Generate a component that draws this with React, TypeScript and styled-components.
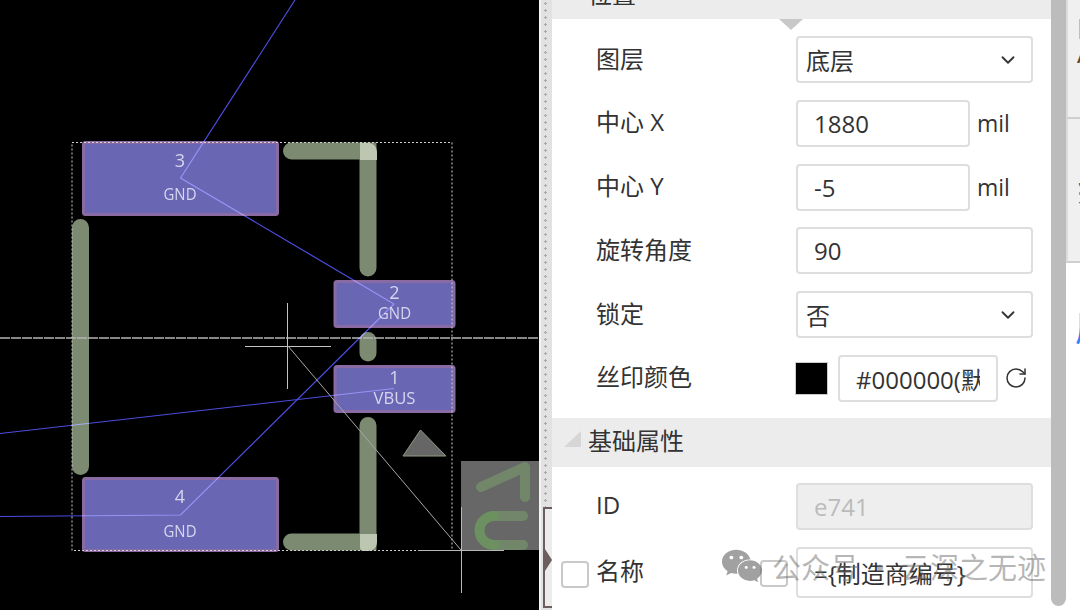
import React from 'react'
import styled, { createGlobalStyle } from 'styled-components'
import { ChevronDown, RotateCw } from 'lucide-react'
import { FaWeixin } from 'react-icons/fa'

const GlobalStyle = createGlobalStyle`
  html, body {
    margin: 0;
    padding: 0;
    background: #fff;
  }
  * {
    box-sizing: border-box;
  }
`

const Page = styled.div`
  position: relative;
  display: flex;
  width: 1080px;
  height: 610px;
  overflow: hidden;
  font-family: 'Open Sans', 'Noto Sans CJK SC', sans-serif;
  color: #333;
`

const Canvas = styled.svg`
  display: block;
  flex: 0 0 539px;
  height: 610px;
  background: #000;
`

const SilkLine = styled.path`
  fill: none;
  stroke: #7b8a70;
  stroke-width: 17;
  stroke-linecap: round;
`

const Ratsnest = styled.g`
  mix-blend-mode: screen;
  stroke: #4c4ce0;
  stroke-width: 1.2;
  fill: none;
`

const PadRect = styled.rect`
  fill: #6966b4;
  stroke: #8a6aa2;
  stroke-width: 3;
`

const PadText = styled.text`
  fill: #d6d6ee;
  font-family: 'Open Sans', sans-serif;
  text-anchor: middle;
`

const Splitter = styled.div`
  position: relative;
  flex: 0 0 13px;
  height: 610px;
  padding-left: 2px;
  background: #e2e2e2;
  border-left: 2px solid #f4f4f4;
`

const SplitterDots = styled.div`
  width: 5px;
  height: 507px;
  background-image: radial-gradient(circle, #a9a9a9 1px, transparent 1.4px);
  background-size: 5px 7px;
`

const SplitterHandle = styled.div`
  position: absolute;
  left: 2px;
  top: 507px;
  width: 9px;
  height: 101px;
  background: #ececec;
  border: 2px solid #6b5e5e;
  border-right: none;
  &::after {
    content: '';
    position: absolute;
    left: 0;
    top: 40px;
    border-left: 7px solid #6b5e5e;
    border-top: 11px solid transparent;
    border-bottom: 11px solid transparent;
  }
`

const Panel = styled.div`
  flex: 0 0 499px;
  height: 610px;
  background: #fff;
`

const SectionHeader = styled.div<{ $caret?: boolean; $offset?: number }>`
  position: relative;
  display: flex;
  align-items: center;
  height: 49px;
  margin-top: ${(p) => p.$offset ?? 0}px;
  padding: 0 0 5px 36px;
  background: #ececec;
  font-size: 24px;
  &::before {
    content: '';
    position: absolute;
    left: 12px;
    bottom: 20px;
    border-bottom: 16px solid #d6d6d6;
    border-left: 17px solid transparent;
  }
  ${(p) =>
    p.$caret &&
    `&::after {
      content: '';
      position: absolute;
      left: 227px;
      top: 100%;
      border-top: 11px solid #c8c8c8;
      border-left: 12px solid transparent;
      border-right: 12px solid transparent;
    }`}
`

const Form = styled.div<{ $top: number }>`
  display: flex;
  flex-direction: column;
  gap: 16.75px;
  padding: ${(p) => p.$top}px 18px 16px 44px;
`

const Row = styled.div`
  display: flex;
  align-items: center;
  min-height: 47px;
`

const Label = styled.div`
  flex: 0 0 200px;
  font-size: 24px;
  line-height: 47px;
  margin-top: -3px;
`

const fieldCss = `
  height: 47px;
  border: 2px solid #dedede;
  border-radius: 4px;
  background: #fff;
  color: #333;
  font-family: 'Open Sans', 'Noto Sans CJK SC', sans-serif;
  font-size: 24px;
`

const Input = styled.input<{ $width?: number; $tall?: boolean }>`
  ${fieldCss}
  width: ${(p) => (p.$width ? `${p.$width}px` : '100%')};
  height: ${(p) => (p.$tall ? 51 : 47)}px;
  min-width: 0;
  padding: 0 16px;
  outline: none;
  &:disabled {
    background: #eeeeee;
    color: #bbb;
    -webkit-text-fill-color: #bbb;
    opacity: 1;
  }
`

const Select = styled.div`
  ${fieldCss}
  display: flex;
  flex: 1;
  align-items: center;
  justify-content: space-between;
  padding: 0 12px 0 8px;
  svg {
    color: #333;
  }
`

const Unit = styled.span`
  margin-left: 7px;
  font-size: 23px;
`

const Swatch = styled.div<{ $color: string }>`
  flex: 0 0 33px;
  height: 33px;
  margin: 0 10px 0 -1px;
  background: ${(p) => p.$color};
  border: 1px solid #ccc;
`

const RefreshButton = styled.span`
  display: flex;
  margin-left: 6px;
  color: #333;
`

const ScrollTrack = styled.div`
  flex: 0 0 15px;
  height: 610px;
  background: #fff;
`

const ScrollThumb = styled.div`
  height: 606px;
  background: #bcbcbc;
  border-radius: 0 0 8px 8px;
`

const RightRail = styled.div`
  display: flex;
  flex: 1;
  flex-direction: column;
  overflow: hidden;
  background: #fff;
`

const RailBlock = styled.div<{ $height: number; $top: number; $size: number; $line: number }>`
  flex: 0 0 ${(p) => p.$height}px;
  padding: ${(p) => p.$top}px 0 0 9px;
  overflow: hidden;
  white-space: nowrap;
  background: #f0f0f0;
  border-left: 2px solid #dcdcdc;
  border-bottom: 2px solid #cfcfcf;
  font-size: ${(p) => p.$size}px;
  line-height: ${(p) => p.$line}px;
  color: #5a4638;
`

const RailLink = styled.div`
  padding: 44px 0 0 9px;
  font-size: 36px;
  line-height: 44px;
  white-space: nowrap;
  color: #2f80ff;
`

const Checkbox = styled.div<{ $left: number; $top: number }>`
  position: absolute;
  left: ${(p) => p.$left}px;
  top: ${(p) => p.$top}px;
  width: 28px;
  height: 27px;
  border: 2px solid #c9c9c9;
  border-radius: 4px;
`

const Watermark = styled.div`
  position: absolute;
  left: 721px;
  top: 545px;
  display: flex;
  align-items: center;
  gap: 9px;
  font-family: 'Noto Sans CJK SC', sans-serif;
  font-size: 29px;
  line-height: 40px;
  white-space: nowrap;
  color: rgba(110, 110, 110, 0.5);
  pointer-events: none;
  svg {
    color: rgba(110, 110, 110, 0.65);
  }
`

const pads = [
  { x: 83.5, y: 142.5, w: 194, h: 72, num: '3', name: 'GND', cx: 180, numY: 167, nameY: 200, nameW: 33 },
  { x: 83.5, y: 478.5, w: 194, h: 72, num: '4', name: 'GND', cx: 180, numY: 503, nameY: 537, nameW: 33 },
  { x: 335, y: 281.5, w: 119, h: 45, num: '2', name: 'GND', cx: 394.5, numY: 299, nameY: 319, nameW: 33 },
  { x: 335, y: 366.5, w: 119, h: 45, num: '1', name: 'VBUS', cx: 394.5, numY: 384, nameY: 404, nameW: 42 },
]

function PcbView() {
  return (
    <Canvas viewBox="0 0 539 610">
      <rect x="461" y="461" width="78" height="89" fill="#676767" />
      <g fill="none" stroke="#72866a" strokeWidth="10" strokeLinecap="round" strokeLinejoin="round">
        <path d="M481 487 L525 467 L525 497" />
        <path d="M523 516 H494 M523 545 H494" />
        <path d="M494 516 A14.5 14.5 0 0 0 494 545" stroke="#6c9060" />
      </g>

      {pads.map((pad) => (
        <g key={pad.num}>
          <PadRect x={pad.x} y={pad.y} width={pad.w} height={pad.h} rx="2" />
          <PadText x={pad.cx} y={pad.numY} fontSize="18">
            {pad.num}
          </PadText>
          <PadText
            x={pad.cx}
            y={pad.nameY}
            fontSize="16.5"
            textLength={pad.nameW}
            lengthAdjust="spacingAndGlyphs"
          >
            {pad.name}
          </PadText>
        </g>
      ))}

      <SilkLine d="M80.5 227.5 V466.5" />
      <SilkLine d="M291.5 151 H368 V268" />
      <SilkLine d="M368 340.5 V353" />
      <SilkLine d="M368 425.5 V542 H291.5" />
      <path d="M360 143 H368.5 A8.5 8.5 0 0 1 377 151.5 V160 H360 Z" fill="#bcc6b0" />
      <path d="M360 534 H377 V542.5 A8.5 8.5 0 0 1 368.5 551 H364 A4 4 0 0 1 360 547 Z" fill="#bcc6b0" />

      <path d="M403 456 H446 L420.5 430 Z" fill="#666" stroke="#8c9c82" strokeWidth="1" />

      <rect x="72" y="142.5" width="380" height="408" fill="none" stroke="#d0d0d0" strokeDasharray="2 2" />
      <path d="M0 338 H539" stroke="#b4b4b4" strokeWidth="1.5" strokeDasharray="10 1" />

      <Ratsnest>
        <path d="M295 0 L180.5 178 L394 304 L180.5 515 L0 516.5" />
        <path d="M0 433.5 L394 388.5" />
      </Ratsnest>

      <g stroke="#a8a8a8" strokeWidth="1" fill="none">
        <path d="M245 346.5 H331 M287.5 303 V389" stroke="#c4c4c4" />
        <path d="M418 550.5 H504 M461.5 507 V593" stroke="#b8b8b8" />
        <path d="M288 346 L461 550" />
      </g>
    </Canvas>
  )
}

export default function App() {
  return (
    <Page>
      <GlobalStyle />
      <PcbView />
      <Splitter>
        <SplitterDots />
        <SplitterHandle />
      </Splitter>
      <Panel>
        <SectionHeader $caret $offset={-30}>
          位置
        </SectionHeader>
        <Form $top={17}>
          <Row>
            <Label>图层</Label>
            <Select>
              底层
              <ChevronDown size={22} strokeWidth={2} />
            </Select>
          </Row>
          <Row>
            <Label>中心 X</Label>
            <Input $width={174} defaultValue="1880" readOnly />
            <Unit>mil</Unit>
          </Row>
          <Row>
            <Label>中心 Y</Label>
            <Input $width={174} defaultValue="-5" readOnly />
            <Unit>mil</Unit>
          </Row>
          <Row>
            <Label>旋转角度</Label>
            <Input defaultValue="90" readOnly />
          </Row>
          <Row>
            <Label>锁定</Label>
            <Select>
              否
              <ChevronDown size={22} strokeWidth={2} />
            </Select>
          </Row>
          <Row>
            <Label>丝印颜色</Label>
            <Swatch $color="#000" />
            <Input $width={160} defaultValue="#000000(默认)" readOnly />
            <RefreshButton>
              <RotateCw size={24} strokeWidth={1.5} />
            </RefreshButton>
          </Row>
        </Form>
        <SectionHeader>基础属性</SectionHeader>
        <Form $top={16}>
          <Row>
            <Label>ID</Label>
            <Input defaultValue="e741" disabled />
          </Row>
          <Row>
            <Label>名称</Label>
            <Input $tall defaultValue="={制造商编号}" readOnly />
          </Row>
        </Form>
      </Panel>
      <ScrollTrack>
        <ScrollThumb />
      </ScrollTrack>
      <RightRail>
        <RailBlock $height={119} $top={16} $size={28} $line={24}>
          D
          <br />A
        </RailBlock>
        <RailBlock $height={144} $top={42} $size={48} $line={56}>
          装
        </RailBlock>
        <RailLink>原</RailLink>
      </RightRail>

      <Checkbox $left={561} $top={561} />
      <Checkbox $left={760} $top={560} />
      <Watermark>
        <FaWeixin size={42} />
        <span>公众号 · 云深之无迹</span>
      </Watermark>
    </Page>
  )
}
